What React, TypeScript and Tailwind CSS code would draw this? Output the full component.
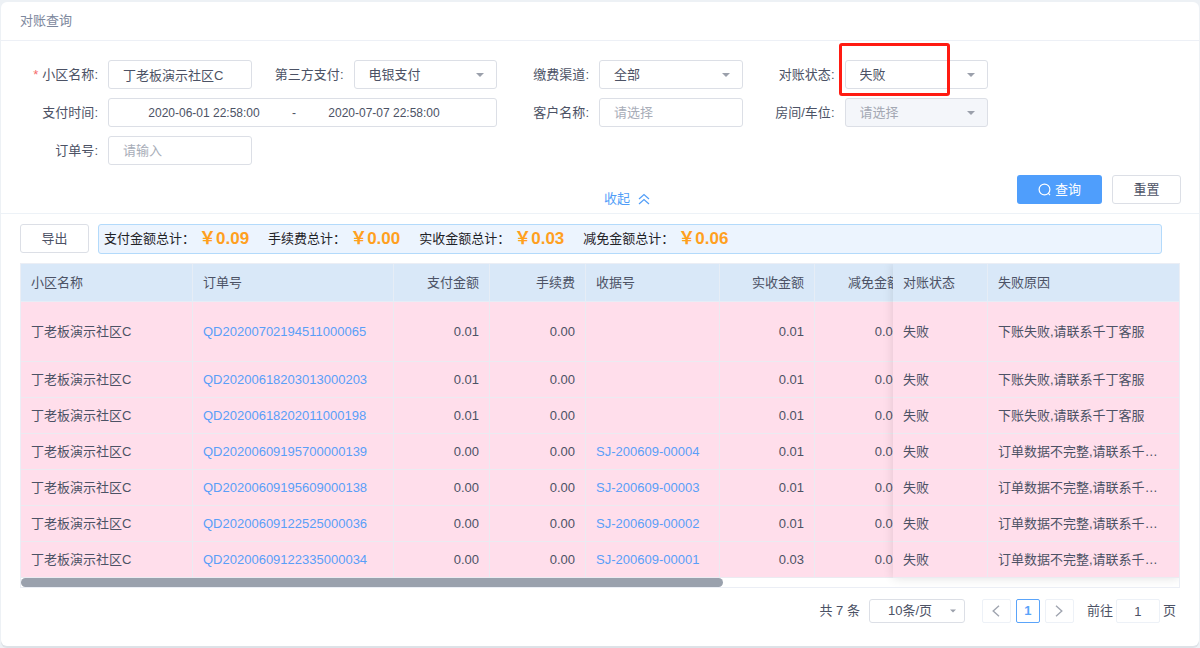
import { useState } from 'react';
import type { ReactNode } from 'react';

const totals = [
  { label: '支付金额总计：', value: '0.09' },
  { label: '手续费总计：', value: '0.00' },
  { label: '实收金额总计：', value: '0.03' },
  { label: '减免金额总计：', value: '0.06' },
];

const failed = '下账失败,请联系千丁客服';
const incomplete = '订单数据不完整,请联系千丁客服';

const orders = [
  { id: 'QD20200702194511000065', paid: '0.01', fee: '0.00', receipt: '', received: '0.01', discount: '0.00', reason: failed, tall: true },
  { id: 'QD20200618203013000203', paid: '0.01', fee: '0.00', receipt: '', received: '0.01', discount: '0.00', reason: failed },
  { id: 'QD20200618202011000198', paid: '0.01', fee: '0.00', receipt: '', received: '0.01', discount: '0.00', reason: failed },
  { id: 'QD20200609195700000139', paid: '0.00', fee: '0.00', receipt: 'SJ-200609-00004', received: '0.01', discount: '0.01', reason: incomplete },
  { id: 'QD20200609195609000138', paid: '0.00', fee: '0.00', receipt: 'SJ-200609-00003', received: '0.01', discount: '0.01', reason: incomplete },
  { id: 'QD20200609122525000036', paid: '0.00', fee: '0.00', receipt: 'SJ-200609-00002', received: '0.01', discount: '0.01', reason: incomplete },
  { id: 'QD20200609122335000034', paid: '0.00', fee: '0.00', receipt: 'SJ-200609-00001', received: '0.03', discount: '0.03', reason: incomplete },
];

const control = 'h-[29px] w-full rounded-[3px] border border-[#dcdfe6] pl-3.5 text-[13px] outline-none';
const th = 'border-r border-b border-[#e6edf6] px-2.5 font-normal whitespace-nowrap';
const td = 'border-r border-b border-[#ebebf1] px-2.5 whitespace-nowrap';

function Caret() {
  return (
    <svg viewBox="0 0 8 4" className="pointer-events-none absolute top-1/2 right-[13px] h-1 w-2 -translate-y-1/2" fill="#9ba0ab">
      <path d="M0 0h8L4 4z" />
    </svg>
  );
}

function Field({ id, label, required, wide, children }: {
  id: string;
  label: string;
  required?: boolean;
  wide?: boolean;
  children: ReactNode;
}) {
  return (
    <div className={wide ? 'col-span-2 flex items-center' : 'flex items-center'}>
      <label htmlFor={id} className="w-[90px] shrink-0 text-right whitespace-nowrap">
        {required && <span className="mr-1 text-[#f56c6c]">*</span>}
        {label}:
      </label>
      <div className="relative ml-2.5 min-w-0 flex-1">{children}</div>
    </div>
  );
}

function Select({ id, options, disabled }: { id: string; options: string[]; disabled?: boolean }) {
  return (
    <>
      <select
        id={id}
        disabled={disabled}
        className={`${control} appearance-none ${disabled ? 'bg-[#f4f6fa] text-[#a3a8b3] opacity-100' : 'bg-white'}`}
      >
        {options.map((option) => (
          <option key={option}>{option}</option>
        ))}
      </select>
      <Caret />
    </>
  );
}

function SearchForm() {
  return (
    <form className="border-b border-[#edf2f7] pt-[19px] pb-1" onSubmit={(e) => e.preventDefault()}>
      <div className="grid grid-cols-4 gap-x-0.5 gap-y-[9px] pr-[211px] pl-[7px]">
        <Field id="community" label="小区名称" required>
          <input id="community" defaultValue="丁老板演示社区C" className={control} />
        </Field>
        <Field id="thirdPay" label="第三方支付">
          <Select id="thirdPay" options={['电银支付']} />
        </Field>
        <Field id="channel" label="缴费渠道">
          <Select id="channel" options={['全部']} />
        </Field>
        <Field id="status" label="对账状态">
          <Select id="status" options={['失败', '成功']} />
          <span className="pointer-events-none absolute -top-[17px] -left-1.5 h-[53px] w-[111px] rounded-[3px] border-3 border-[#ff1b12]" />
        </Field>
        <Field id="payStart" label="支付时间" wide>
          <div className="flex h-[29px] items-center rounded-[3px] border border-[#dcdfe6] pl-5 text-xs">
            <input id="payStart" defaultValue="2020-06-01 22:58:00" className="w-[150px] text-center outline-none" />
            <span className="w-[30px] text-center">-</span>
            <input aria-label="支付结束时间" defaultValue="2020-07-07 22:58:00" className="w-[150px] text-center outline-none" />
          </div>
        </Field>
        <Field id="customer" label="客户名称">
          <input id="customer" placeholder="请选择" className={`${control} placeholder:text-[#a8adb8]`} />
        </Field>
        <Field id="room" label="房间/车位">
          <Select id="room" options={['请选择']} disabled />
        </Field>
        <Field id="orderNo" label="订单号">
          <input id="orderNo" placeholder="请输入" className={`${control} placeholder:text-[#a8adb8]`} />
        </Field>
      </div>
      <div className="mt-[10px] grid h-[34px] grid-cols-[1fr_auto_1fr] pr-[18px] pl-[72px]">
        <button type="button" className="col-start-2 flex h-5 items-center gap-2 self-end text-[#529ef8]">
          收起
          <svg viewBox="0 0 12 12" className="size-3" fill="none" stroke="currentColor" strokeWidth="1.2">
            <path d="M1 6l5-4.5L11 6M1 11l5-4.5L11 11" />
          </svg>
        </button>
        <div className="flex gap-2.5 justify-self-end">
          <button type="submit" className="flex h-[29px] w-[85px] items-center justify-center gap-1 rounded-[3px] bg-[#4f9efc] text-white">
            <svg viewBox="0 0 13 13" className="size-[13px]" fill="none" stroke="currentColor" strokeWidth="1.2">
              <circle cx="6.5" cy="6.5" r="5.4" />
              <path d="M10.2 10.2l1.8 1.8" />
            </svg>
            查询
          </button>
          <button type="reset" className="h-[29px] w-[69px] rounded-[3px] border border-[#dcdfe6]">重置</button>
        </div>
      </div>
    </form>
  );
}

function OrdersTable() {
  return (
    <div className="mt-[9px] overflow-hidden border border-[#ebeef5]">
      <div className="flex">
        <div className="min-w-0 flex-1 overflow-x-auto [scrollbar-width:none]">
          <table className="w-[890px] table-fixed border-separate border-spacing-0">
            <colgroup>
              <col className="w-[172px]" />
              <col className="w-[201px]" />
              <col className="w-[96px]" />
              <col className="w-[96px]" />
              <col className="w-[134px]" />
              <col className="w-[95px]" />
              <col className="w-[96px]" />
            </colgroup>
            <thead className="bg-[#d9e8f8]">
              <tr className="h-[38px]">
                <th scope="col" className={`${th} text-left`}>小区名称</th>
                <th scope="col" className={`${th} text-left`}>订单号</th>
                <th scope="col" className={`${th} text-right`}>支付金额</th>
                <th scope="col" className={`${th} text-right`}>手续费</th>
                <th scope="col" className={`${th} text-left`}>收据号</th>
                <th scope="col" className={`${th} text-right`}>实收金额</th>
                <th scope="col" className={`${th} text-right`}>减免金额</th>
              </tr>
            </thead>
            <tbody className="bg-[#ffdeeb]">
              {orders.map((order) => (
                <tr key={order.id} className={order.tall ? 'h-15' : 'h-9'}>
                  <td className={td}>丁老板演示社区C</td>
                  <td className={td}>
                    <a href={`#${order.id}`} className="text-[#5a9ef8]">{order.id}</a>
                  </td>
                  <td className={`${td} text-right`}>{order.paid}</td>
                  <td className={`${td} text-right`}>{order.fee}</td>
                  <td className={td}>
                    {order.receipt && <a href={`#${order.receipt}`} className="text-[#5a9ef8]">{order.receipt}</a>}
                  </td>
                  <td className={`${td} text-right`}>{order.received}</td>
                  <td className={`${td} text-right`}>{order.discount}</td>
                </tr>
              ))}
            </tbody>
          </table>
        </div>
        {/* fixed right columns */}
        <div className="relative w-[286px] shrink-0 shadow-[0_0_10px_rgba(0,0,0,0.12)]">
          <table className="w-full table-fixed border-separate border-spacing-0">
            <colgroup>
              <col className="w-[95px]" />
              <col />
            </colgroup>
            <thead className="bg-[#d9e8f8]">
              <tr className="h-[38px]">
                <th scope="col" className={`${th} text-left`}>对账状态</th>
                <th scope="col" className={`${th} border-r-0 text-left`}>失败原因</th>
              </tr>
            </thead>
            <tbody className="bg-[#ffdeeb]">
              {orders.map((order) => (
                <tr key={order.id} className={order.tall ? 'h-15' : 'h-9'}>
                  <td className={td}>失败</td>
                  <td className={`${td} truncate border-r-0`}>{order.reason}</td>
                </tr>
              ))}
            </tbody>
          </table>
        </div>
      </div>
      <div className="h-[9px]">
        <div className="h-full w-[702px] rounded-full bg-[#9aa1ad]" />
      </div>
    </div>
  );
}

function Pagination() {
  const [page, setPage] = useState('1');

  return (
    <nav className="flex h-6 items-center justify-end pr-1">
      <span className="mr-[9px]">共 7 条</span>
      <div className="relative mr-[17px] w-24">
        <select aria-label="每页条数" className="h-6 w-full appearance-none rounded-[3px] border border-[#dcdfe6] pl-[18px] outline-none">
          <option>10条/页</option>
          <option>20条/页</option>
        </select>
        <svg viewBox="0 0 6 4" className="pointer-events-none absolute top-1/2 right-[9px] h-1 w-1.5 -translate-y-1/2" fill="#9ba0ab">
          <path d="M0 0.5h6L3 3.5z" />
        </svg>
      </div>
      <button type="button" aria-label="上一页" className="flex h-6 w-[29px] items-center justify-center rounded-xs border border-[#edf1f7] text-[#a0a5b0]">
        <svg viewBox="0 0 8 12" className="h-3 w-2" fill="none" stroke="currentColor" strokeWidth="1.4">
          <path d="M7 .8L1.2 6 7 11.2" />
        </svg>
      </button>
      <button type="button" className="mx-[5px] h-6 w-6 rounded-xs border border-[#5aa4fa] font-bold text-[#5aa4fa]">1</button>
      <button type="button" aria-label="下一页" className="flex h-6 w-[29px] items-center justify-center rounded-xs border border-[#edf1f7] text-[#a0a5b0]">
        <svg viewBox="0 0 8 12" className="h-3 w-2" fill="none" stroke="currentColor" strokeWidth="1.4">
          <path d="M1 .8L6.8 6 1 11.2" />
        </svg>
      </button>
      <label htmlFor="jump" className="ml-[13px]">前往</label>
      <input
        id="jump"
        value={page}
        onChange={(e) => setPage(e.target.value)}
        className="mx-[3px] h-6 w-11 rounded-xs border border-[#edf1f7] text-center outline-none"
      />
      页
    </nav>
  );
}

export default function App() {
  return (
    <div className="min-h-screen bg-[#edf1f5] px-px py-0.5 font-['Liberation_Sans','Noto_Sans_CJK_SC',sans-serif] text-[13px] leading-5 text-[#4c5265]">
      <main className="rounded-md bg-white shadow-[0_2px_0_#dde2e7]">
        <h1 className="border-b border-[#edf0f6] px-[19px] pt-[9px] pb-[9px] text-[#7d889d]">对账查询</h1>
        <SearchForm />
        <section className="px-[19px] pt-2.5 pb-[23px]">
          <div className="flex items-start gap-[9px] pr-[18px]">
            <button type="button" className="h-[29px] w-[69px] rounded-[3px] border border-[#dcdfe6]">导出</button>
            <div className="flex h-[30px] flex-1 items-center gap-[19px] rounded-[3px] border border-[#b3dafb] bg-[#ecf4fe] pl-[5px] text-[#1f2227]">
              {totals.map((total) => (
                <p key={total.label} className="flex items-center gap-1">
                  {total.label}
                  <strong className="text-[17px] text-[#ffa01e]">￥{total.value}</strong>
                </p>
              ))}
            </div>
          </div>
          <OrdersTable />
          <div className="mt-[11px]">
            <Pagination />
          </div>
        </section>
      </main>
    </div>
  );
}
